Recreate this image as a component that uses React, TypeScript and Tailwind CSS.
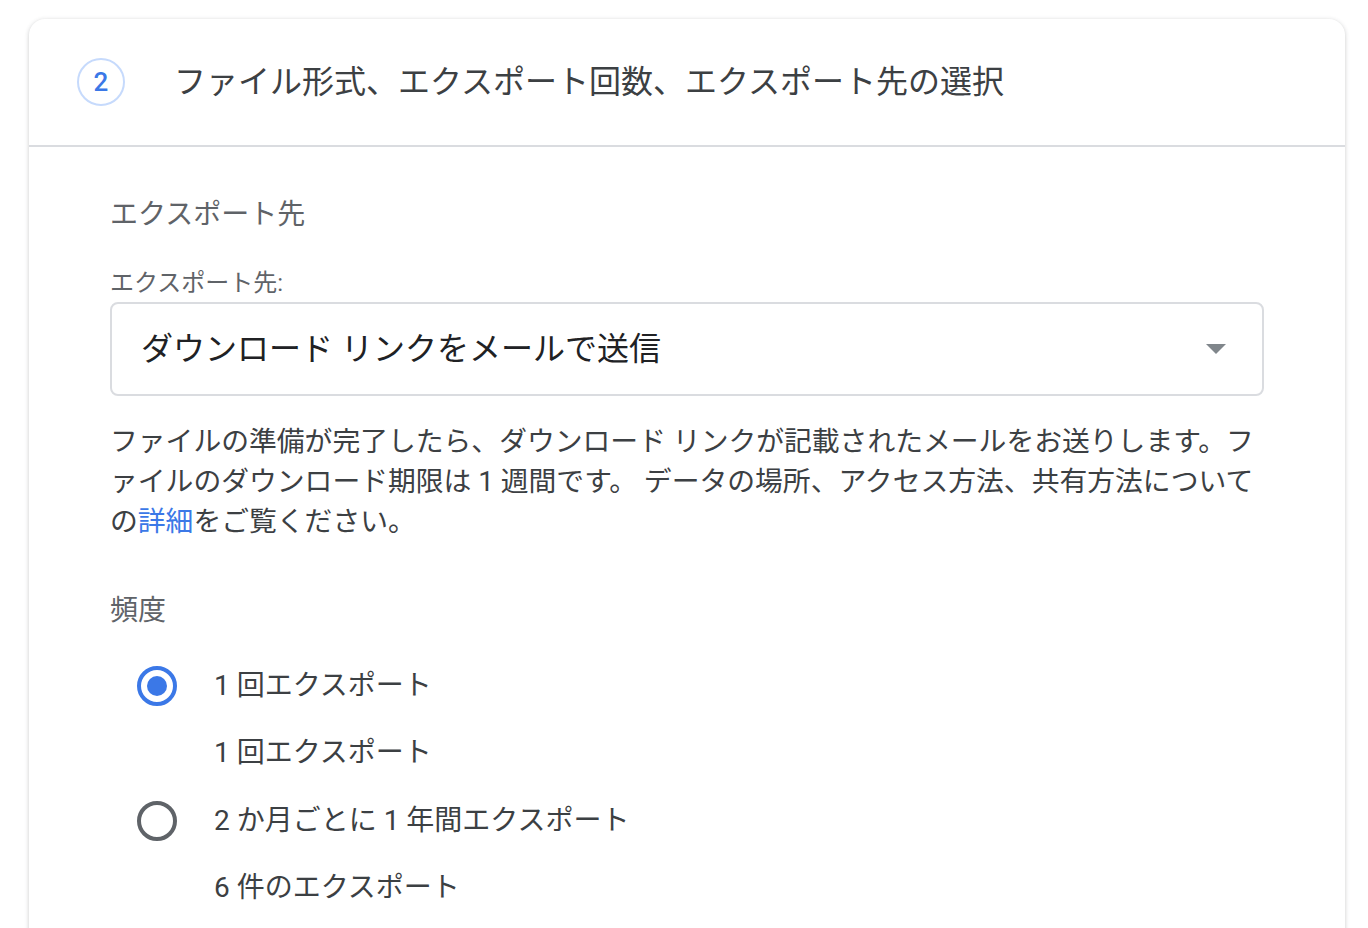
import { ReactNode } from 'react';

const font = { fontFamily: 'Roboto, "Noto Sans CJK JP", sans-serif' };

function Radio({ checked }: { checked: boolean }) {
  return checked ? (
    <span className="flex h-[40px] w-[40px] shrink-0 items-center justify-center rounded-full border-[4px] border-[#3b78e7]">
      <span className="h-[20px] w-[20px] rounded-full bg-[#3b78e7]" />
    </span>
  ) : (
    <span className="h-[40px] w-[40px] shrink-0 rounded-full border-[4px] border-[#5f6368]" />
  );
}

function Option({ checked, label, sub }: { checked: boolean; label: ReactNode; sub: ReactNode }) {
  return (
    <div>
      <label className="flex h-[48px] items-center pl-[27px] cursor-pointer">
        <Radio checked={checked} />
        <span className="ml-[37px] text-[28px] leading-[36px] text-[#3c4043]">{label}</span>
      </label>
      <div className="mt-[25px] pl-[104px] text-[28px] leading-[36px] text-[#3c4043]">{sub}</div>
    </div>
  );
}

export default function App() {
  return (
    <div className="min-h-screen bg-white pt-[19px] pl-[29px]" style={font}>
      <div className="w-[1316px] min-h-[940px] rounded-t-[16px] bg-white shadow-[0_1px_4px_rgba(60,64,67,0.28)]">
        {/* Header */}
        <div className="flex h-[128px] items-center pl-[48px] border-b-2 border-[#dadce0]">
          <div className="flex h-[48px] w-[48px] items-center justify-center rounded-full border-2 border-[#c6dafc] text-[26px] font-medium text-[#3b78e7]">
            2
          </div>
          <h2 className="ml-[49px] text-[32px] leading-[40px] text-[#3c4043]">
            ファイル形式、エクスポート回数、エクスポート先の選択
          </h2>
        </div>

        {/* Body */}
        <div className="px-[81px] pt-[50px]">
          <h3 className="text-[28px] leading-[36px] text-[#5f6368]">エクスポート先</h3>

          <div className="mt-[34px] text-[24px] leading-[32px] text-[#5f6368]">エクスポート先:</div>
          <div className="mt-[3px] flex h-[94px] items-center justify-between rounded-[8px] border-2 border-[#dadce0] pl-[29px] pr-[36px]">
            <span className="text-[32px] leading-[40px] text-[#202124]">ダウンロード リンクをメールで送信</span>
            <span className="h-0 w-0 border-x-[10px] border-t-[10px] border-x-transparent border-t-[#80868b]" />
          </div>

          <p className="mt-[26px] text-[27.8px] leading-[40px] text-[#3c4043]">
            ファイルの準備が完了したら、ダウンロード リンクが記載されたメールをお送りします。ファイルのダウンロード期限は 1 週間です。 データの場所、アクセス方法、共有方法についての
            <a href="#" className="text-[#3b78e7]">詳細</a>
            をご覧ください。
          </p>

          <h3 className="mt-[51px] text-[28px] leading-[36px] text-[#5f6368]">頻度</h3>

          <div className="mt-[33px] flex flex-col gap-[26px]">
            <Option checked label="1 回エクスポート" sub="1 回エクスポート" />
            <Option checked={false} label="2 か月ごとに 1 年間エクスポート" sub="6 件のエクスポート" />
          </div>
        </div>
      </div>
    </div>
  );
}
